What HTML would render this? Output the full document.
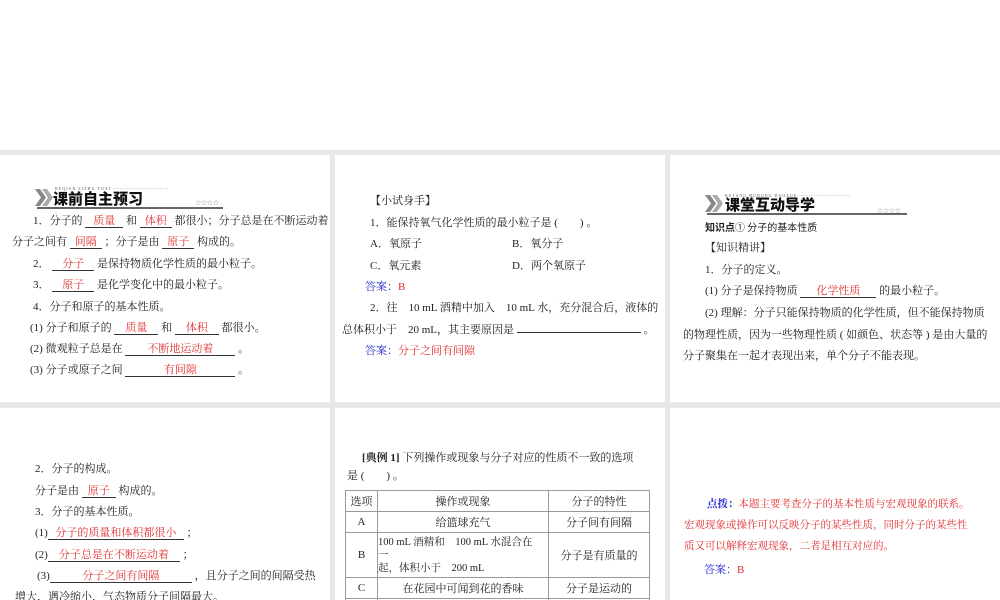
<!DOCTYPE html>
<html><head><meta charset="utf-8"><style>
body{margin:0;width:1000px;height:600px;overflow:hidden;background:#fff;font-family:"Liberation Serif","Noto Serif CJK SC",serif;font-size:11px;color:#222}
.bg{position:absolute;left:0;top:150px;width:1000px;height:450px;background:#e8e8e8}
.p{position:absolute;background:#fff;overflow:hidden}
.t{position:absolute;white-space:nowrap;line-height:14px}
.r{color:#e03030}
.b{color:#2a2ad0}
u{text-decoration:none;border-bottom:1px solid #333;display:inline-block;text-align:center;line-height:12px;color:#e03030}
.hd{position:absolute;font-family:"Noto Sans CJK SC",sans-serif;font-weight:900;font-size:15px;line-height:17px;color:#111}
.hl{position:absolute;height:2px;background:#555}
.sm{position:absolute;font-size:4px;color:#555;letter-spacing:1px}
.st{position:absolute;font-size:6px;color:#999}
.ch{position:absolute}
table{position:absolute;border-collapse:collapse;font-size:11px}
td{border:1px solid #999;text-align:center;height:20px;padding:0}
</style></head><body>
<div class="bg"></div>

<div class="p" style="left:0;top:155px;width:330px;height:247px">
 <svg class="ch" style="left:35px;top:34px" width="18" height="17" viewBox="0 0 18 17"><path d="M0 0h5l6 8.5-6 8.5H0l6-8.5z" fill="#888"/><path d="M7 0h5l6 8.5-6 8.5H7l6-8.5z" fill="#aaa"/></svg>
 <div class="sm" style="left:55px;top:31px">KEQIAN ZIZHU YUXI ------------------------</div>
 <div class="hd" style="left:53px;top:35px">课前自主预习</div>
 <div class="st" style="left:195px;top:43px">☆☆☆☆</div>
 <div class="hl" style="left:37px;top:52px;width:186px;height:2px;background:#666"></div>
 <div class="t" style="left:33px;top:59px">1．分子的 <u style="width:38px">质量</u> 和 <u style="width:32px">体积</u> 都很小；分子总是在不断运动着；</div>
 <div class="t" style="left:12px;top:80px">分子之间有 <u style="width:32px">间隔</u> ；分子是由 <u style="width:32px">原子</u> 构成的。</div>
 <div class="t" style="left:33px;top:102px">2． <u style="width:42px">分子</u> 是保持物质化学性质的最小粒子。</div>
 <div class="t" style="left:33px;top:123px">3． <u style="width:42px">原子</u> 是化学变化中的最小粒子。</div>
 <div class="t" style="left:33px;top:145px">4．分子和原子的基本性质。</div>
 <div class="t" style="left:30px;top:166px">(1) 分子和原子的 <u style="width:44px">质量</u> 和 <u style="width:44px">体积</u> 都很小。</div>
 <div class="t" style="left:30px;top:187px">(2) 微观粒子总是在 <u style="width:110px">不断地运动着</u> 。</div>
 <div class="t" style="left:30px;top:208px">(3) 分子或原子之间 <u style="width:110px">有间隙</u> 。</div>
</div>

<div class="p" style="left:335px;top:155px;width:330px;height:247px">
 <div class="t" style="left:35px;top:39px">【小试身手】</div>
 <div class="t" style="left:35px;top:61px">1．能保持氧气化学性质的最小粒子是 (　　) 。</div>
 <div class="t" style="left:35px;top:82px">A．氧原子</div><div class="t" style="left:177px;top:82px">B．氧分子</div>
 <div class="t" style="left:35px;top:104px">C．氧元素</div><div class="t" style="left:177px;top:104px">D．两个氧原子</div>
 <div class="t" style="left:30px;top:125px"><span class="b">答案：</span><span class="r">B</span></div>
 <div class="t" style="left:35px;top:146px">2．往　10 mL 酒精中加入　10 mL 水，充分混合后，液体的</div>
 <div class="t" style="left:7px;top:168px">总体积小于　20 mL，其主要原因是 <u style="width:124px"></u> 。</div>
 <div class="t" style="left:30px;top:189px"><span class="b">答案：</span><span class="r">分子之间有间隙</span></div>
</div>

<div class="p" style="left:670px;top:155px;width:330px;height:247px">
 <svg class="ch" style="left:35px;top:40px" width="18" height="17" viewBox="0 0 18 17"><path d="M0 0h5l6 8.5-6 8.5H0l6-8.5z" fill="#888"/><path d="M7 0h5l6 8.5-6 8.5H7l6-8.5z" fill="#aaa"/></svg>
 <div class="sm" style="left:55px;top:38px">KETANG HUDONG DAOXUE ----------------------</div>
 <div class="hd" style="left:55px;top:41px">课堂互动导学</div>
 <div class="st" style="left:207px;top:51px">☆☆☆☆</div>
 <div class="hl" style="left:37px;top:58px;width:200px;height:2px;background:#666"></div>
 <div class="t" style="left:35px;top:65px;font-family:'Noto Sans CJK SC',sans-serif;font-size:10px"><b>知识点</b>① 分子的基本性质</div>
 <div class="t" style="left:35px;top:86px">【知识精讲】</div>
 <div class="t" style="left:35px;top:108px">1．分子的定义。</div>
 <div class="t" style="left:35px;top:129px">(1) 分子是保持物质 <u style="width:76px">化学性质</u> 的最小粒子。</div>
 <div class="t" style="left:35px;top:151px">(2) 理解：分子只能保持物质的化学性质，但不能保持物质</div>
 <div class="t" style="left:13px;top:173px">的物理性质，因为一些物理性质 ( 如颜色、状态等 ) 是由大量的</div>
 <div class="t" style="left:13px;top:194px">分子聚集在一起才表现出来，单个分子不能表现。</div>
</div>

<div class="p" style="left:0;top:408px;width:330px;height:192px">
 <div class="t" style="left:35px;top:54px">2．分子的构成。</div>
 <div class="t" style="left:35px;top:76px">分子是由 <u style="width:34px">原子</u> 构成的。</div>
 <div class="t" style="left:35px;top:97px">3．分子的基本性质。</div>
 <div class="t" style="left:35px;top:118px">(1)<u style="width:136px">分子的质量和体积都很小</u> ；</div>
 <div class="t" style="left:35px;top:140px">(2)<u style="width:132px">分子总是在不断运动着</u> ；</div>
 <div class="t" style="left:37px;top:161px">(3)<u style="width:142px">分子之间有间隔</u> ，且分子之间的间隔受热</div>
 <div class="t" style="left:15px;top:182px">增大，遇冷缩小，气态物质分子间隔最大。</div>
</div>

<div class="p" style="left:335px;top:408px;width:330px;height:192px">
 <div class="t" style="left:27px;top:43px"><b>[典例 1]</b> 下列操作或现象与分子对应的性质不一致的选项</div>
 <div class="t" style="left:12px;top:61px">是 (　　) 。</div>
 <table style="left:10px;top:82px;width:305px">
  <tr><td style="width:31px">选项</td><td style="width:170px">操作或现象</td><td>分子的特性</td></tr>
  <tr><td>A</td><td>给篮球充气</td><td>分子间有间隔</td></tr>
  <tr><td style="height:44px">B</td><td style="text-align:left;font-size:10.5px;line-height:13px">100 mL 酒精和　100 mL 水混合在<br>一<br>起，体积小于　200 mL</td><td>分子是有质量的</td></tr>
  <tr><td>C</td><td>在花园中可闻到花的香味</td><td>分子是运动的</td></tr>
  <tr><td>D</td><td></td><td></td></tr>
 </table>
</div>

<div class="p" style="left:670px;top:408px;width:330px;height:192px">
 <div class="t" style="left:37px;top:90px;font-size:10.5px"><b class="b">点拨：</b><span class="r">本题主要考查分子的基本性质与宏观现象的联系。</span></div>
 <div class="t r" style="left:14px;top:111px;font-size:10.5px">宏观现象或操作可以反映分子的某些性质，同时分子的某些性</div>
 <div class="t r" style="left:14px;top:132px;font-size:10.5px">质又可以解释宏观现象，二者是相互对应的。</div>
 <div class="t" style="left:34px;top:155px"><span class="b">答案：</span><span class="r">B</span></div>
</div>
</body></html>
